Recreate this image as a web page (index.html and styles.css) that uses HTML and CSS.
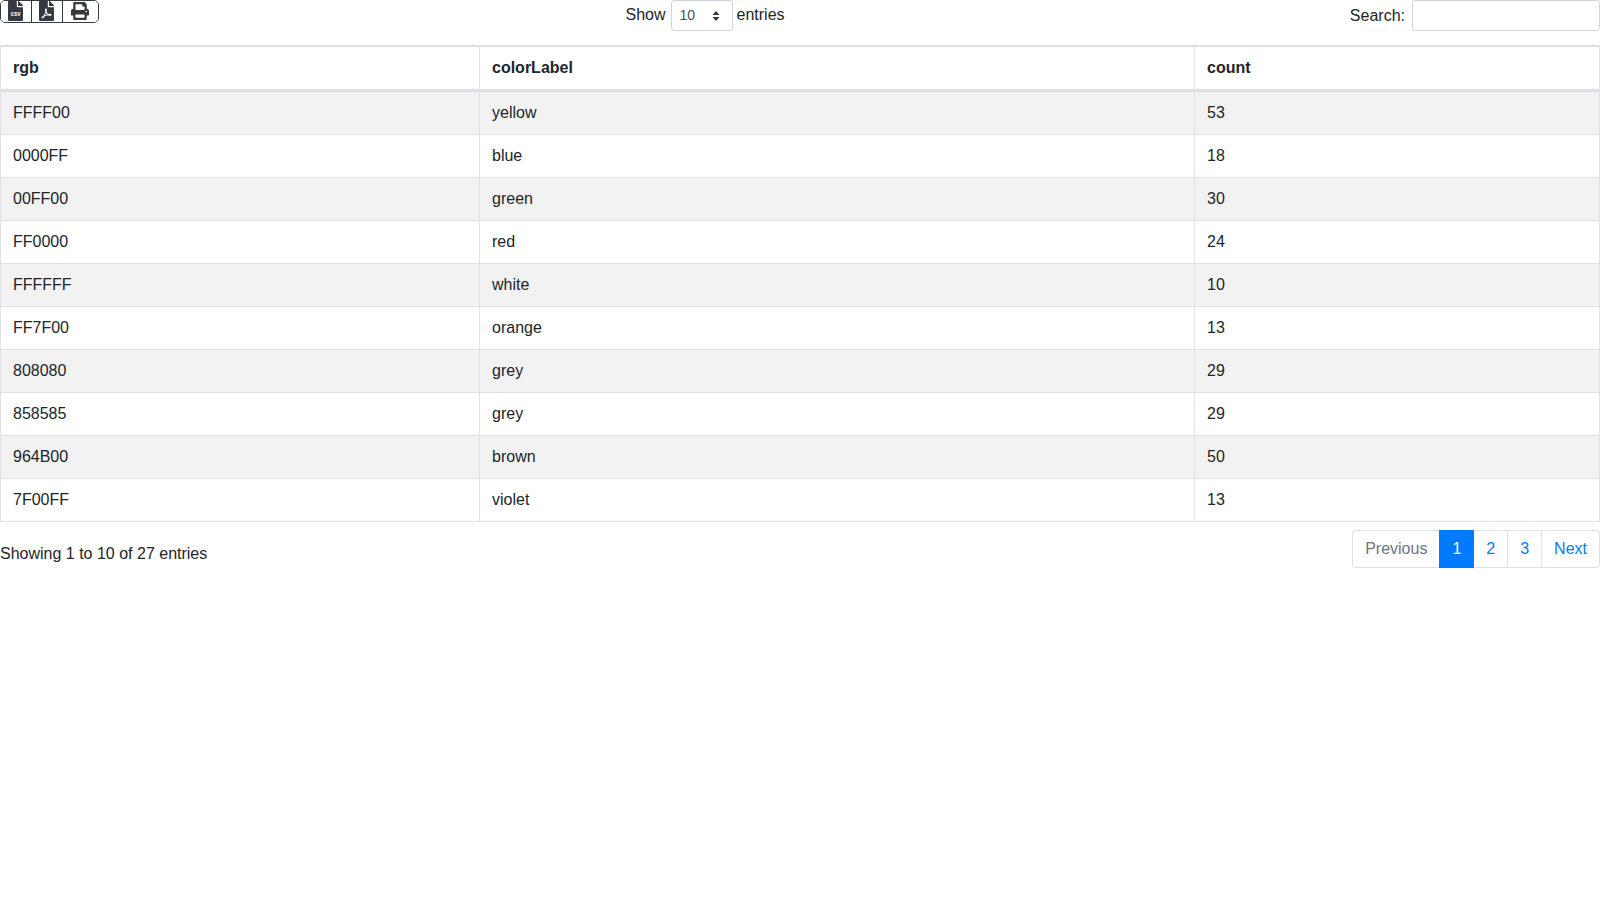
FILE: index.html
```html
<!DOCTYPE html>
<html lang="en">
<head>
<meta charset="utf-8">
<title>Colors</title>
<link rel="stylesheet" href="styles.css">
</head>
<body>
<div class="wrapper">
  <div class="toolbar">
    <div class="tool-left">
      <div class="btn-group">
        <button class="tool-btn btn-csv" type="button" aria-label="CSV">
          <svg class="ico" viewBox="0 0 384 512"><path d="M224 136V0H24C10.7 0 0 10.7 0 24v464c0 13.3 10.7 24 24 24h336c13.3 0 24-10.7 24-24V160H248c-13.2 0-24-10.8-24-24zM377 105L279.100 7c-4.500-4.500-10.600-7-17-7H256v128h128v-6.100c0-6.300-2.500-12.400-7-16.900z"/><text class="csv-text" x="72" y="384" textLength="248" lengthAdjust="spacingAndGlyphs">csv</text></svg>
        </button>
        <button class="tool-btn btn-pdf" type="button" aria-label="PDF">
          <svg class="ico" viewBox="0 0 384 512"><path d="M181.900 256.100c-5-16-4.900-46.900-2-46.900 8.400 0 7.600 36.900 2 46.900zm-1.700 47.200c-7.700 20.200-17.300 43.300-28.400 62.700 18.300-7 39-17.200 62.900-21.900-12.700-9.600-24.900-23.400-34.500-40.800zM86.100 428.100c0 .8 13.200-5.400 34.900-40.200-6.700 6.300-29.100 24.500-34.900 40.200zM248 160h136v328c0 13.300-10.700 24-24 24H24c-13.300 0-24-10.700-24-24V24C0 10.700 10.700 0 24 0h200v136c0 13.200 10.800 24 24 24zm-8 171.800c-20-12.200-33.300-29-42.700-53.800 4.500-18.500 11.600-46.600 6.200-64.200-4.700-29.400-42.400-26.500-47.800-6.800-5 18.300-.4 44.100 8.100 77-11.600 27.600-28.700 64.600-40.800 85.800-.1 0-.1.100-.2.100-27.100 13.900-73.600 44.500-54.500 68 5.600 6.900 16 10 21.500 10 17.900 0 35.700-18 61.100-61.800 25.800-8.500 54.100-19.100 79-23.200 21.700 11.800 47.100 19.500 64 19.500 29.200 0 31.200-32 19.700-43.400-13.900-13.600-54.300-9.700-73.600-7.200zM377 105L279 7c-4.500-4.500-10.600-7-17-7h-6v128h128v-6.100c0-6.300-2.500-12.400-7-16.900zm-74.100 255.300c4.100-2.700-2.500-11.900-42.800-9 37.100 15.800 42.800 9 42.800 9z"/></svg>
        </button>
        <button class="tool-btn btn-print" type="button" aria-label="Print">
          <svg class="ico" viewBox="0 0 512 512"><path d="M448 192V77.250c0-8.490-3.370-16.620-9.370-22.630L393.370 9.370c-6-6-14.140-9.370-22.630-9.370H96C78.330 0 64 14.330 64 32v160c-35.350 0-64 28.650-64 64v112c0 8.840 7.160 16 16 16h48v96c0 17.670 14.330 32 32 32h320c17.670 0 32-14.330 32-32v-96h48c8.840 0 16-7.160 16-16V256c0-35.350-28.650-64-64-64zm-64 256H128v-96h256v96zm0-224H128V64h192v48c0 8.840 7.160 16 16 16h48v96zm48 72c-13.250 0-24-10.750-24-24 0-13.260 10.750-24 24-24s24 10.740 24 24c0 13.250-10.750 24-24 24z"/></svg>
        </button>
      </div>
    </div>
    <div class="tool-center">
      <label class="length">Show
        <span class="select"><span>10</span>
          <svg class="carets" viewBox="0 0 8 12"><path d="M4 1 7.500 5h-7zM4 11 .5 7h7z"/></svg>
        </span>
      entries</label>
    </div>
    <div class="tool-right">
      <label class="search">Search: <input class="search-input" type="search"></label>
    </div>
  </div>

  <table class="data">
    <colgroup><col class="c1"><col class="c2"><col class="c3"></colgroup>
    <thead>
      <tr><th>rgb</th><th>colorLabel</th><th>count</th></tr>
    </thead>
    <tbody>
      <tr><td>FFFF00</td><td>yellow</td><td>53</td></tr>
      <tr><td>0000FF</td><td>blue</td><td>18</td></tr>
      <tr><td>00FF00</td><td>green</td><td>30</td></tr>
      <tr><td>FF0000</td><td>red</td><td>24</td></tr>
      <tr><td>FFFFFF</td><td>white</td><td>10</td></tr>
      <tr><td>FF7F00</td><td>orange</td><td>13</td></tr>
      <tr><td>808080</td><td>grey</td><td>29</td></tr>
      <tr><td>858585</td><td>grey</td><td>29</td></tr>
      <tr><td>964B00</td><td>brown</td><td>50</td></tr>
      <tr><td>7F00FF</td><td>violet</td><td>13</td></tr>
    </tbody>
  </table>

  <div class="footer">
    <div class="info">Showing 1 to 10 of 27 entries</div>
    <ul class="pagination">
      <li class="page first"><a class="muted" href="#">Previous</a></li>
      <li class="page active"><a href="#">1</a></li>
      <li class="page"><a href="#">2</a></li>
      <li class="page"><a href="#">3</a></li>
      <li class="page last"><a href="#">Next</a></li>
    </ul>
  </div>
</div>
</body>
</html>
```

FILE: styles.css
```css
* { box-sizing: border-box; }
html, body { margin: 0; padding: 0; background: #fff; }
body {
  font-family: "Liberation Sans", Arial, sans-serif;
  font-size: 16px;
  line-height: 24px;
  color: #212529;
}
.wrapper { width: 1600px; }
.toolbar {
  display: grid;
  grid-template-columns: 625.5px auto 1fr;
  height: 45px;
  align-items: start;
}
.tool-left { display: flex; }
.btn-group {
  display: flex;
  height: 23px;
  border: 1px solid #343a40;
  border-radius: 5px;
  overflow: hidden;
}
.tool-btn {
  display: flex;
  align-items: flex-start;
  justify-content: center;
  padding: 0;
  margin: 0;
  background: #fff;
  border: 0;
  border-right: 1px solid #343a40;
}
.tool-btn.btn-csv { width: 31px; padding-right: 2px; }
.tool-btn.btn-pdf { width: 31px; padding-right: 2px; }
.tool-btn.btn-print { width: 35px; padding-right: 2px; border-right: 0; }
.ico { display: block; fill: #343a40; overflow: visible; }
.btn-csv .ico, .btn-pdf .ico { width: 15px; height: 20px; }
.btn-print .ico { width: 18px; height: 18px; margin-top: 1px; }
.csv-text {
  fill: #fff;
  font-family: "Liberation Sans", Arial, sans-serif;
  font-size: 200px;
  font-weight: 700;
}
.tool-center { display: flex; }
.length { display: flex; align-items: flex-start; gap: 5px; white-space: nowrap; line-height: 30px; }
.select {
  display: flex;
  align-items: center;
  justify-content: space-between;
  width: 62px;
  height: 31px;
  margin-right: -1px;
  padding: 0 12px 0 8px;
  border: 1px solid #ced4da;
  border-radius: 3.2px;
  font-size: 14px;
  line-height: 21px;
  color: #495057;
}
.carets { display: block; width: 8px; height: 12px; fill: #343a40; }
.tool-right { display: flex; justify-content: flex-end; }
.search { display: flex; align-items: flex-start; gap: 7px; line-height: 31px; }
.search-input {
  display: block;
  width: 188px;
  height: 31px;
  margin: 0;
  padding: 4px 8px;
  border: 1px solid #ced4da;
  border-radius: 3.2px;
  background: #fff;
  font: inherit;
  outline: 0;
}
.data {
  width: 1600px;
  table-layout: fixed;
  border-collapse: separate;
  border-spacing: 0;
  border: 1px solid #dee2e6;
}
.c1 { width: 479px; }
.c2 { width: 715px; }
.c3 { width: 404px; }
.data th, .data td {
  padding: 9px 12px;
  border-top: 1px solid #dee2e6;
  border-right: 1px solid #dee2e6;
  text-align: left;
  vertical-align: top;
}
.data th:last-child, .data td:last-child { border-right: 0; }
.data th { font-weight: 700; border-bottom: 2px solid #dee2e6; }
.data tbody tr:nth-child(odd) { background: #f2f2f2; }
.footer {
  display: flex;
  justify-content: space-between;
  align-items: flex-start;
  padding-top: 8px;
}
.info { padding-top: 12px; }
.pagination {
  display: flex;
  list-style: none;
  margin: 0;
  padding: 0;
}
.page a {
  display: block;
  padding: 8px 12px;
  line-height: 20px;
  border: 1px solid #dee2e6;
  margin-left: -1px;
  color: #007bff;
  background: #fff;
  text-decoration: none;
}
.page a.muted { color: #6c757d; }
.page.first a { margin-left: 0; border-radius: 4px 0 0 4px; }
.page.last a { border-radius: 0 4px 4px 0; }
.page.active a { background: #007bff; border-color: #007bff; color: #fff; position: relative; }
```
